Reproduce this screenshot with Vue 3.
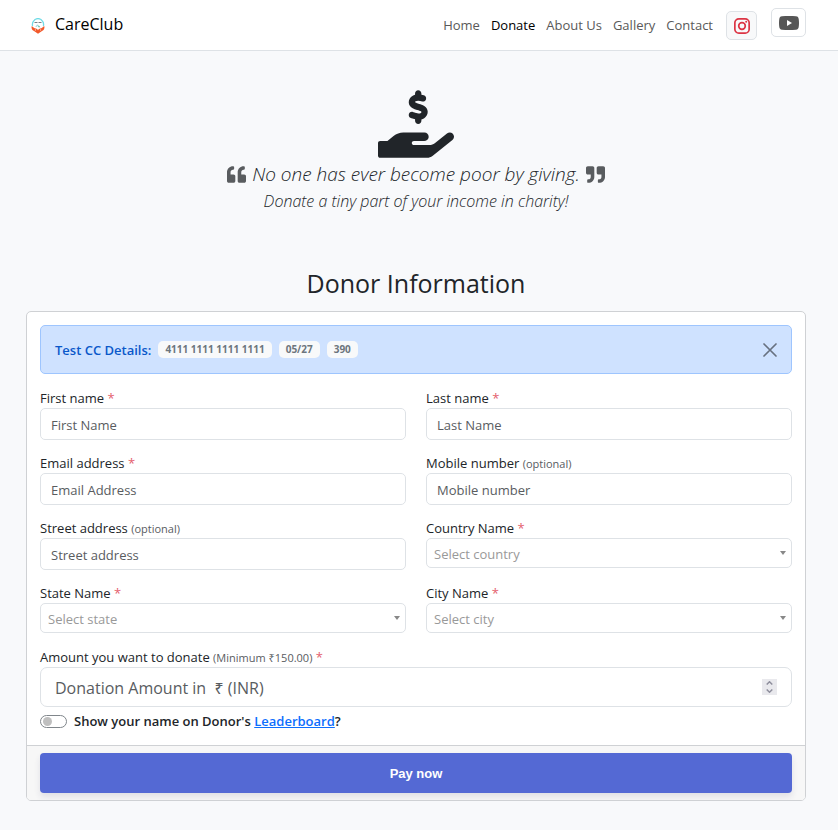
<script setup>
import { ref } from 'vue'

const alertOpen = ref(true)
const showName = ref(false)
const amount = ref('')

const quotePath =
  'M464 256h-80v-64c0-35.3 28.7-64 64-64h8c13.3 0 24-10.7 24-24V56c0-13.3-10.7-24-24-24h-8c-88.4 0-160 71.6-160 160v240c0 26.5 21.5 48 48 48h128c26.5 0 48-21.5 48-48V304c0-26.5-21.5-48-48-48zm-288 0H96v-64c0-35.3 28.7-64 64-64h8c13.3 0 24-10.7 24-24V56c0-13.3-10.7-24-24-24h-8C71.6 32 0 103.6 0 192v240c0 26.5 21.5 48 48 48h128c26.5 0 48-21.5 48-48V304c0-26.5-21.5-48-48-48z'

const links = [
  { text: 'Home' },
  { text: 'Donate', active: true },
  { text: 'About Us' },
  { text: 'Gallery' },
  { text: 'Contact' },
]

const fields = [
  { id: 'first', label: 'First name', required: true, placeholder: 'First Name', type: 'text' },
  { id: 'last', label: 'Last name', required: true, placeholder: 'Last Name', type: 'text' },
  { id: 'email', label: 'Email address', required: true, placeholder: 'Email Address', type: 'email' },
  { id: 'mobile', label: 'Mobile number', placeholder: 'Mobile number', type: 'tel' },
  { id: 'street', label: 'Street address', placeholder: 'Street address', type: 'text' },
  { id: 'country', label: 'Country Name', required: true, placeholder: 'Select country', select: true },
  { id: 'state', label: 'State Name', required: true, placeholder: 'Select state', select: true },
  { id: 'city', label: 'City Name', required: true, placeholder: 'Select city', select: true },
]

function step(by) {
  amount.value = Math.max(0, Number(amount.value || 0) + by)
}
</script>

<template>
  <div class="page">
    <header class="navbar">
      <a class="brand" href="#">
        <svg class="logo" viewBox="0 0 14 16" aria-hidden="true">
          <path d="M1.600 8A5.700 5.700 0 0 1 2.500 3.200C4.500-.3 9.500-.3 11.500 3.200A5.700 5.700 0 0 1 12.400 8" fill="none" stroke="#6fdbe6" stroke-width="1.300" />
          <path d="M3.500 4.500h3M7.500 4.500h3" stroke="#6a7378" stroke-width=".9" />
          <path d="M4.800 9 6.500 6.800 7.600 9" fill="none" stroke="#8fd3dd" stroke-width="1" />
          <path d="M7.300 9.300 7.700 7.200l1.600 2.100" fill="#63b891" />
          <path d="M.6 8.300c1.400.2 2 1.500 3.100 1.900 1.900.2 2.900 1 3.300 2 .4-1 1.400-1.800 3.300-2 1.100-.4 1.700-1.700 3.100-1.900.3 2.300-.4 4-2.400 4.800L7 15.800l-4-2.700C1 12.300.3 10.600.6 8.300z" fill="#f2592a" />
          <path d="M4.400 11.300v1.300M9.600 11.300v1.300" stroke="#fff" stroke-width=".7" />
        </svg>
        <span>CareClub</span>
      </a>
      <nav class="nav">
        <a v-for="l in links" :key="l.text" href="#" :class="{ active: l.active }">{{ l.text }}</a>
      </nav>
      <div class="social">
        <a class="social-link instagram" href="#" aria-label="Instagram">
          <svg viewBox="0 0 16 16" width="16" height="16" aria-hidden="true" fill="none" stroke="currentColor" stroke-width="1.700">
            <rect x=".85" y=".85" width="14.300" height="14.300" rx="4" />
            <circle cx="8" cy="8" r="3.300" />
            <circle cx="12.200" cy="3.800" r="1" fill="currentColor" stroke="none" />
          </svg>
        </a>
        <a class="social-link youtube" href="#" aria-label="YouTube">
          <svg viewBox="0 0 20 14" width="20" height="14" aria-hidden="true">
            <path d="M3 .3C7 -.1 13 -.1 17 .3c1.800.2 2.500 1.200 2.700 2.700.4 2.700.4 5.300 0 8-.2 1.500-.9 2.500-2.700 2.700-4 .4-10 .4-14 0C1.200 13.500.5 12.500.3 11c-.4-2.700-.4-5.300 0-8C.5 1.500 1.200.5 3 .3z" fill="currentColor" />
            <path d="M8 4v6l5-3z" fill="#fff" />
          </svg>
        </a>
      </div>
    </header>

    <main class="content">
      <section class="hero">
        <svg class="hand" viewBox="0 0 576 512" aria-hidden="true">
          <path transform="translate(17 0)" fill="currentColor" d="M312 24V34.5c6.4 1.2 12.6 2.7 18.2 4.2c12.8 3.4 20.4 16.6 17 29.4s-16.6 20.4-29.4 17c-10.9-2.9-21.1-4.9-30.2-5c-7.3-.1-14.7 1.7-19.4 4.4c-2.1 1.3-3.1 2.4-3.5 3c-.3 .5-.7 1.2-.7 2.8c0 .3 0 .5 0 .6c.2 .2 .9 1.2 3.3 2.6c5.8 3.500 14.400 6.200 27.400 10.100l.9 .3c11.100 3.300 25.900 7.800 37.900 15.300c13.700 8.600 26.100 22.900 26.400 44.900c.3 22.500-11.400 38.900-26.700 48.500c-6.700 4.100-13.900 7-21.300 8.800V232c0 13.300-10.700 24-24 24s-24-10.700-24-24V220.600c-9.500-2.300-18.200-5.300-25.600-7.800c-2.100-.7-4.100-1.400-6-2c-12.600-4.200-19.400-17.800-15.200-30.400s17.800-19.400 30.400-15.200c2.600 .9 5 1.700 7.300 2.500c13.600 4.600 23.400 7.900 33.900 8.300c8 .3 15.100-1.600 19.200-4.100c1.900-1.200 2.800-2.200 3.200-2.900c.4-.6 .9-1.800 .8-4.100l0-.2c0-1 0-2.100-4-4.600c-5.700-3.600-14.300-6.400-27.100-10.300l-1.900-.6c-10.800-3.200-25-7.500-36.400-14.400c-13.500-8.100-26.500-22-26.600-44.100c-.1-22.900 12.900-38.600 27.700-47.400c6.400-3.800 13.300-6.400 20.200-8.200V24c0-13.300 10.700-24 24-24s24 10.700 24 24z" />
          <path fill="currentColor" d="M565.3 328.1c-11.8-10.7-30.2-10-42.6 0L430.3 402c-11.3 9.1-25.4 14-40 14H272c-8.8 0-16-7.200-16-16s7.200-16 16-16h78.300c15.900 0 30.700-10.900 33.300-26.600 3.300-20-12.100-37.400-31.600-37.400H192c-27 0-53.100 9.300-74.100 26.300L71.400 384H16c-8.800 0-16 7.200-16 16v96c0 8.800 7.200 16 16 16h356.800c14.500 0 28.600-4.900 40-14L564 377c15.200-12.100 16.400-35.300 1.300-48.900z" />
        </svg>
        <p class="quote">
          <svg class="mark" viewBox="0 32 512 448" aria-hidden="true"><path fill="currentColor" :d="quotePath" /></svg>
          <span>No one has ever become poor by giving.</span>
          <svg class="mark flipped" viewBox="0 32 512 448" aria-hidden="true"><path fill="currentColor" :d="quotePath" /></svg>
        </p>
        <p class="tagline">Donate a tiny part of your income in charity!</p>
      </section>

      <h1>Donor Information</h1>

      <form class="card" @submit.prevent>
        <div class="card-body">
          <div v-if="alertOpen" class="alert">
            <strong>Test CC Details:</strong>
            <span class="badge">4111 1111 1111 1111</span>
            <span class="badge">05/27</span>
            <span class="badge">390</span>
            <button type="button" class="close" aria-label="Close" @click="alertOpen = false">
              <svg viewBox="0 0 14 14" width="14" height="14" aria-hidden="true"><path d="M1 1l12 12M13 1L1 13" stroke="currentColor" stroke-width="1.700" stroke-linecap="round" /></svg>
            </button>
          </div>

          <div class="grid">
            <div v-for="f in fields" :key="f.id" class="field">
              <label :for="f.id">{{ f.label }} <span v-if="f.required" class="req">*</span><span v-else class="hint">(optional)</span></label>
              <div v-if="f.select" class="select-wrap">
                <select :id="f.id"><option>{{ f.placeholder }}</option></select>
              </div>
              <input v-else :id="f.id" :type="f.type" :placeholder="f.placeholder">
            </div>
          </div>

          <div class="field amount">
            <label for="amount">Amount you want to donate <span class="hint">(Minimum ₹150.00)</span> <span class="req">*</span></label>
            <div class="amount-box">
              <input id="amount" v-model="amount" type="number" placeholder="Donation Amount in &nbsp;₹ (INR)">
              <div class="spinner">
                <button type="button" aria-label="Increase" @click="step(1)"><svg viewBox="0 0 7 4" width="7" height="4"><path d="M.7 3.500 3.500.8l2.800 2.700" /></svg></button>
                <button type="button" aria-label="Decrease" @click="step(-1)"><svg viewBox="0 0 7 4" width="7" height="4"><path d="M.7.5 3.500 3.200 6.300.5" /></svg></button>
              </div>
            </div>
          </div>

          <div class="switch-row">
            <input id="show" v-model="showName" type="checkbox" role="switch">
            <label for="show">Show your name on Donor's <a href="#">Leaderboard</a>?</label>
          </div>
        </div>
        <footer class="card-footer">
          <button type="submit" class="pay">Pay now</button>
        </footer>
      </form>
    </main>
  </div>
</template>

<style>
body {
  margin: 0;
  background: #f8f9fb;
}
</style>

<style scoped>
.page {
  min-height: 100vh;
  box-sizing: border-box;
  background: #f8f9fb;
  color: #212529;
  font-family: "Open Sans", "Noto Sans", sans-serif;
  font-size: 13px;
  line-height: 20px;
}
.page *,
.page *::before {
  box-sizing: border-box;
}
.navbar {
  display: flex;
  align-items: center;
  height: 51px;
  padding: 0 32px 0 31px;
  background: #fff;
  border-bottom: 1px solid #dee2e6;
}
.brand {
  display: flex;
  align-items: center;
  gap: 10px;
  margin-right: auto;
  color: #000;
  font-size: 16px;
  line-height: 24px;
  text-decoration: none;
}
.brand span {
  margin-bottom: 2px;
}
.logo {
  width: 14px;
  height: 16px;
  margin-top: 2px;
}
.nav {
  display: flex;
  gap: 11px;
}
.nav a {
  color: #595959;
  text-decoration: none;
}
.nav a.active {
  color: #000;
}
.social {
  display: flex;
  align-items: flex-start;
  gap: 14px;
  margin: 0 0 2px 13px;
}
.social-link {
  display: flex;
  align-items: center;
  justify-content: center;
  height: 29px;
  border: 1px solid #dee2e6;
  border-radius: 5px;
}
.instagram {
  width: 31px;
  margin-top: 3px;
  background: #f8f9fa;
  color: #dc3545;
}
.youtube {
  width: 35px;
  color: #565656;
}
.content {
  padding: 39px 32px 29px 26px;
}
.hero {
  display: flex;
  flex-direction: column;
  align-items: center;
  font-style: italic;
  font-weight: 300;
}
.hand {
  width: 76px;
  height: 68px;
  margin-bottom: 1px;
}
.quote {
  display: flex;
  align-items: center;
  gap: 6px;
  margin: 0;
  font-size: 19px;
  line-height: 30px;
}
.mark {
  width: 19px;
  height: 17px;
  color: #595c5f;
}
.flipped {
  transform: rotate(180deg);
}
.tagline {
  margin: 0;
  font-size: 16px;
  line-height: 24px;
}
h1 {
  margin: 52px 0 10px;
  font-size: 25px;
  line-height: 36px;
  font-weight: 400;
  text-align: center;
}
.card {
  overflow: hidden;
  background: #fff;
  border: 1px solid #cfd1d4;
  border-radius: 5px;
}
.card-body {
  padding: 13px 13px 14px;
}
.alert {
  display: flex;
  align-items: center;
  gap: 7px;
  height: 49px;
  margin-bottom: 15px;
  padding: 0 14px;
  background: #cfe2ff;
  border: 1px solid #9ec5fe;
  border-radius: 5px;
  color: #0a58ca;
}
.alert strong {
  font-weight: 600;
}
.badge {
  padding: 0 7px;
  border-radius: 5px;
  background: #f8f9fa;
  color: #6c757d;
  font-size: 10px;
  line-height: 17px;
  font-weight: 700;
}
.close {
  display: flex;
  margin-left: auto;
  padding: 0;
  border: 0;
  background: none;
  color: #687180;
  cursor: pointer;
}
.grid {
  display: grid;
  grid-template-columns: 1fr 1fr;
  gap: 14px 20px;
}
.field label {
  display: block;
  line-height: 19px;
}
.req {
  color: #e4606d;
}
.hint {
  color: #595c5f;
  font-size: 11px;
}
.field input,
.field select {
  display: block;
  width: 100%;
  height: 32px;
  margin: 0;
  padding: 1px 10px 0;
  border: 1px solid #dee2e6;
  border-radius: 5px;
  outline: 0;
  background: #fff;
  color: #212529;
  font: inherit;
}
.field input::placeholder {
  color: #595c5f;
  opacity: 1;
}
.select-wrap {
  position: relative;
}
.field select {
  height: 30px;
  padding: 2px 7px 0;
  appearance: none;
  color: #999;
}
.select-wrap::after {
  content: "";
  position: absolute;
  top: 13px;
  right: 6px;
  border: 3px solid transparent;
  border-top: 4px solid #888;
  border-bottom: 0;
  pointer-events: none;
}
.amount {
  margin-top: 15px;
}
.amount-box {
  display: flex;
  align-items: center;
  height: 40px;
  padding: 0 14px;
  border: 1px solid #dee2e6;
  border-radius: 7px;
}
.field .amount-box input {
  flex: 1;
  height: 36px;
  padding: 2px 0 0;
  border: 0;
  font-size: 16px;
  appearance: textfield;
}
.amount-box input::-webkit-inner-spin-button {
  appearance: none;
}
.spinner {
  display: flex;
  flex-direction: column;
  width: 15px;
  height: 16px;
  background: #e9e9ed;
}
.spinner button {
  display: flex;
  align-items: center;
  justify-content: center;
  flex: 1;
  padding: 0;
  border: 0;
  background: none;
}
.spinner path {
  fill: none;
  stroke: #8f8f9d;
  stroke-width: 1.5;
}
.switch-row {
  display: flex;
  align-items: center;
  gap: 7px;
  margin-top: 4px;
  font-weight: 600;
}
.switch-row input {
  display: flex;
  align-items: center;
  width: 27px;
  height: 13px;
  margin: 0;
  padding: 0 2px;
  appearance: none;
  border: 1px solid #80868b;
  border-radius: 7px;
  background: #fff;
}
.switch-row input::before {
  content: "";
  width: 9px;
  height: 9px;
  border-radius: 50%;
  background: #bfbfbf;
}
.switch-row input:checked {
  justify-content: flex-end;
}
.switch-row a {
  color: #0d6efd;
}
.card-footer {
  padding: 7px 13px;
  border-top: 1px solid #cfd1d4;
  background: #f7f7f7;
}
.pay {
  display: block;
  width: 100%;
  height: 40px;
  padding: 0;
  border: 0;
  border-radius: 4px;
  background: #5469d4;
  color: #fff;
  box-shadow: 0 4px 6px rgba(50, 50, 93, 0.11);
  font-family: "Liberation Sans", Arial, sans-serif;
  font-size: 13px;
  font-weight: 700;
}
</style>
